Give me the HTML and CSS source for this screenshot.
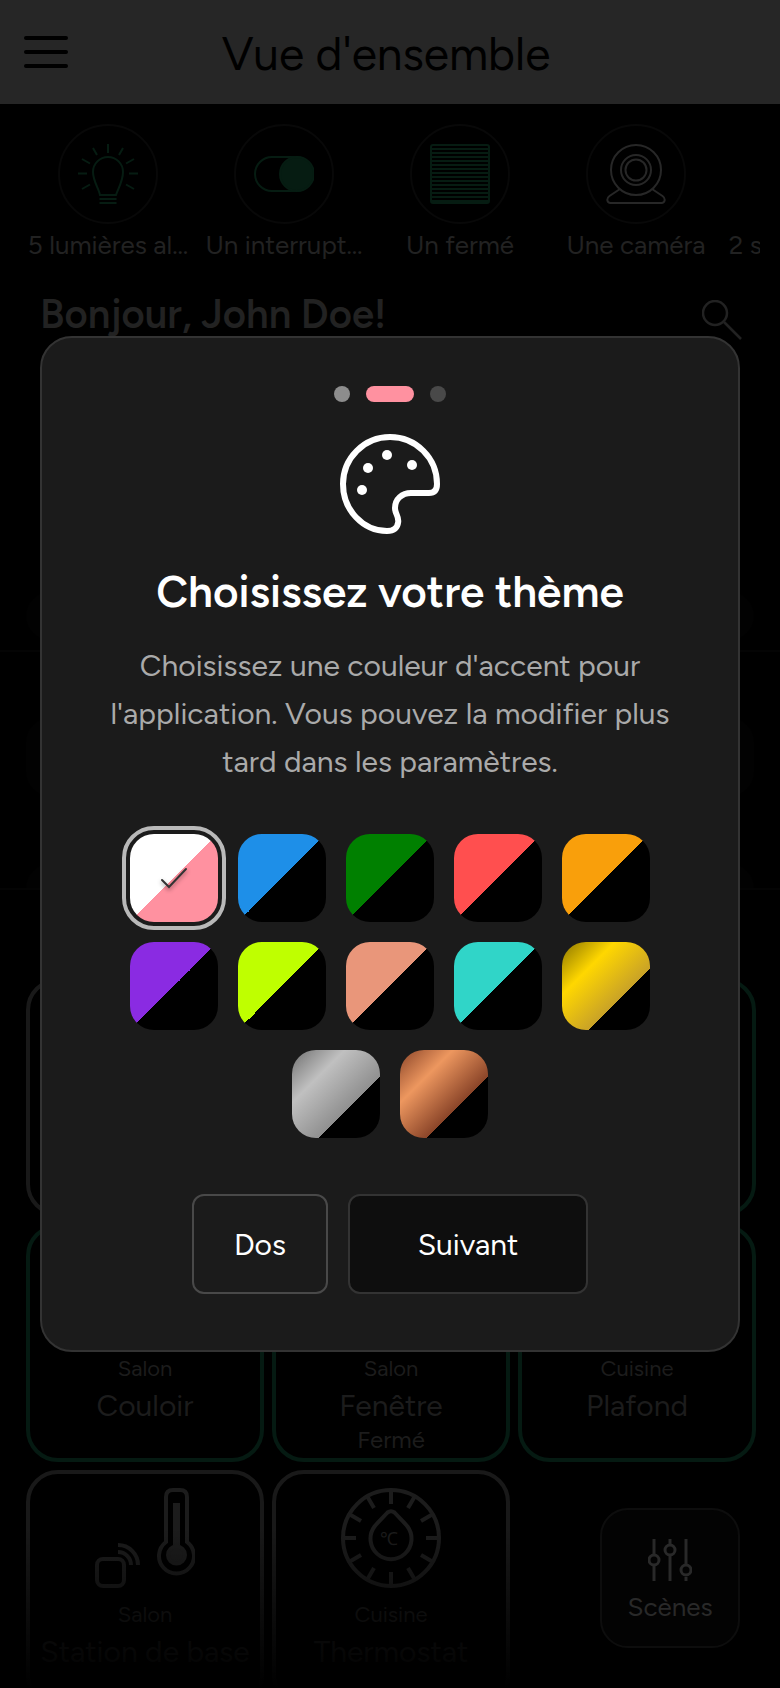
FILE: index.html
```html
<!DOCTYPE html>
<html lang="fr">
<head>
    <meta charset="UTF-8">
    <meta name="viewport" content="width=device-width, initial-scale=1.0">
    <title>Vue d'ensemble</title>
    <link rel="stylesheet" href="styles.css">
</head>
<body>

<div class="app">
    <header class="header">
        <button class="menu-btn" type="button" aria-label="Menu">
            <span></span><span></span><span></span>
        </button>
        <h1 class="header-title">Vue d'ensemble</h1>
    </header>

    <main class="content">
        <div class="status-bar">
            <a class="status green" href="#lights">
                <span class="status-icon">
                    <svg viewBox="0 0 60 60" fill="none" stroke="currentColor" stroke-width="2">
                        <path d="M22 51c-1-6-7-14-7-23a15 15 0 0 1 30 0c0 9-5 17-7 23z"/>
                        <path d="M21.500 55h17M21.500 59h17M30 0v9M15 4l4 7M45 4l-4 7M4 15l8 4.500M56 15l-8 4.500M0 29.500h9M60 29.500h-9M4 45l8-4.500M56 45l-8-4.500"/>
                    </svg>
                </span>
                <span class="status-label">5 lumières al…</span>
            </a>
            <a class="status green" href="#switches">
                <span class="status-icon">
                    <svg viewBox="0 0 60 60" fill="none" stroke="currentColor" stroke-width="2">
                        <rect x="1" y="13" width="58" height="34" rx="17"/>
                        <circle cx="43" cy="30" r="17" fill="currentColor"/>
                    </svg>
                </span>
                <span class="status-label">Un interrupt…</span>
            </a>
            <a class="status green" href="#covers">
                <span class="status-icon">
                    <svg viewBox="0 0 60 60" fill="none" stroke="currentColor" stroke-width="2">
                        <rect x="1" y="1" width="58" height="58" rx="2"/>
                        <path d="M1 5h58M1 9h58M1 13h58M1 17h58M1 21h58M1 25h58M1 29h58M1 33h58M1 37h58M1 41h58M1 45h58M1 49h58M1 53h58M1 57h58"/>
                    </svg>
                </span>
                <span class="status-label">Un fermé</span>
            </a>
            <a class="status" href="#cameras">
                <span class="status-icon">
                    <svg viewBox="0 0 60 60" fill="none" stroke="currentColor" stroke-width="2">
                        <circle cx="30" cy="26" r="25"/>
                        <circle cx="30" cy="26" r="15"/>
                        <circle cx="30" cy="26" r="10.500"/>
                        <path d="M14 45 3.500 52C0 54.500 1 59 4.500 59h51c3.500 0 4.500-4.500 1-7L46 45"/>
                    </svg>
                </span>
                <span class="status-label">Une caméra</span>
            </a>
            <a class="status" href="#sensors">
                <span class="status-icon"></span>
                <span class="status-label">2 serrures ou…</span>
            </a>
        </div>

        <div class="greeting">
            <h2 class="greeting-text">Bonjour, John Doe!</h2>
            <button class="search-btn" type="button" aria-label="Rechercher">
                <svg viewBox="0 0 40 40" fill="none" stroke="currentColor" stroke-width="2.500">
                    <circle cx="13" cy="13" r="12"/>
                    <path d="m22 22 17 17"/>
                </svg>
            </button>
        </div>

        <section class="panel panel-top">
            <div class="pill"></div>
        </section>
        <section class="panel">
            <div class="tile"></div>
            <div class="tile"></div>
        </section>

        <section class="cards">
            <article class="card"></article>
            <article class="card on"></article>
            <article class="card on"></article>
            <article class="card on">
                <div class="card-icon"></div>
                <p class="card-room">Salon</p>
                <h3 class="card-name">Couloir</h3>
            </article>
            <article class="card on">
                <div class="card-icon"></div>
                <p class="card-room">Salon</p>
                <h3 class="card-name">Fenêtre</h3>
                <p class="card-state">Fermé</p>
            </article>
            <article class="card on">
                <div class="card-icon"></div>
                <p class="card-room">Cuisine</p>
                <h3 class="card-name">Plafond</h3>
            </article>
            <article class="card">
                <svg class="card-icon" viewBox="0 0 100 100" fill="none" stroke="currentColor" stroke-width="4">
                    <rect x="2" y="71" width="27" height="27" rx="6"/>
                    <path d="M23 57a20 20 0 0 1 20 20M23 64a13 13 0 0 1 13 13"/>
                    <path d="M71 54V9q0-7 7-7h7q7 0 7 7v45a17.500 17.500 0 1 1-21 0z"/>
                    <path stroke-width="7" d="M81.500 15v48"/>
                    <circle cx="81.500" cy="67" r="8.500" fill="currentColor"/>
                </svg>
                <p class="card-room">Salon</p>
                <h3 class="card-name">Station de base</h3>
            </article>
            <article class="card">
                <svg class="card-icon" viewBox="0 0 100 100" fill="none" stroke="currentColor" stroke-width="4">
                    <circle cx="50" cy="50" r="48"/>
                    <path d="M50 2v14M50 84v14M2 50h13M85 50h13M26 8l7 12M74 8l-7 12M8 26l12 7M92 26l-12 7M8 74l12-7M92 74l-12-7M26 92l7-12M74 92l-7-12"/>
                    <path d="M46.500 24.500q3.500-2.500 7 0c5 5.500 10 10 13 14a20.500 20.500 0 1 1-33 0c3-4 8-8.500 13-14z"/>
                    <text class="unit" x="48" y="57" text-anchor="middle">℃</text>
                </svg>
                <p class="card-room">Cuisine</p>
                <h3 class="card-name">Thermostat</h3>
            </article>
        </section>
    </main>

    <div class="fade"></div>
    <button class="scenes" type="button">
        <svg viewBox="0 0 44 42" fill="none" stroke="currentColor" stroke-width="3">
            <path d="M6 0v15M6 27v15M22 0v5M22 17v25M38 0v26M38 38v4"/>
            <circle cx="6" cy="21" r="5"/>
            <circle cx="22" cy="11" r="5"/>
            <circle cx="38" cy="31" r="5"/>
        </svg>
        Scènes
    </button>
</div>

<div class="overlay">
    <div class="modal" role="dialog" aria-modal="true" aria-labelledby="modal-title">
        <div class="steps">
            <span class="step done"></span>
            <span class="step active"></span>
            <span class="step"></span>
        </div>
        <svg class="palette" viewBox="0 0 100 100" fill="none" stroke="#fff" stroke-width="6">
            <path d="M50 3a47 47 0 0 0-47 47c0 26 20 47 44 47 7 0 10.500-3 11.200-9 .7-6-3.200-8-3.200-14 0-9 7-15 16-15h18c6 0 8-4 8-9C97 24 76 3 50 3z"/>
            <g fill="#fff" stroke="none">
                <circle cx="22" cy="56" r="5"/>
                <circle cx="28" cy="34" r="5"/>
                <circle cx="47" cy="21" r="5"/>
                <circle cx="72" cy="31" r="5"/>
            </g>
        </svg>
        <h2 class="modal-title" id="modal-title">Choisissez votre thème</h2>
        <p class="modal-text">Choisissez une couleur d'accent pour l'application. Vous pouvez la modifier plus tard dans les paramètres.</p>

        <div class="swatches">
            <button class="swatch pink selected" type="button" aria-label="Rose" aria-pressed="true">
                <svg viewBox="0 0 28 24" fill="none" stroke="#333" stroke-width="2" stroke-linecap="round">
                    <path d="m2 14 7 7L26 3"/>
                </svg>
            </button>
            <button class="swatch blue" type="button" aria-label="Bleu"></button>
            <button class="swatch forest" type="button" aria-label="Vert"></button>
            <button class="swatch red" type="button" aria-label="Rouge"></button>
            <button class="swatch orange" type="button" aria-label="Orange"></button>
            <button class="swatch purple" type="button" aria-label="Violet"></button>
            <button class="swatch lime" type="button" aria-label="Citron vert"></button>
            <button class="swatch salmon" type="button" aria-label="Saumon"></button>
            <button class="swatch turquoise" type="button" aria-label="Turquoise"></button>
            <button class="swatch gold" type="button" aria-label="Or"></button>
            <button class="swatch silver" type="button" aria-label="Argent"></button>
            <button class="swatch bronze" type="button" aria-label="Bronze"></button>
        </div>

        <div class="actions">
            <button class="btn" type="button">Dos</button>
            <button class="btn btn-next" type="button">Suivant</button>
        </div>
    </div>
</div>

</body>
</html>
```
FILE: styles.css
```css
* {
    box-sizing: border-box;
}

body {
    margin: 0;
    background: #000;
    color: #222;
    font-family: Figtree, Lato, "Liberation Sans", sans-serif;
}

h1, h2, h3, p {
    margin: 0;
    font-weight: 400;
}

button {
    margin: 0;
    padding: 0;
    border: 0;
    background: none;
    color: inherit;
    font: inherit;
    cursor: pointer;
}

a {
    color: inherit;
    text-decoration: none;
}

svg {
    display: block;
}

.app {
    position: relative;
    height: 100vh;
    overflow: hidden;
}

/* header */
.header {
    display: grid;
    grid-template-columns: 44px 1fr 44px;
    align-items: center;
    height: 104px;
    padding: 4px 32px 0 24px;
    background: #262626;
    color: #000;
}

.menu-btn {
    display: flex;
    flex-direction: column;
    gap: 10px;
    padding-bottom: 4px;
}

.menu-btn span {
    width: 44px;
    height: 4px;
    border-radius: 2px;
    background: #000;
}

.header-title {
    font-size: 46px;
    line-height: 56px;
    text-align: center;
}

/* status icons */
.status-bar {
    display: flex;
    gap: 16px;
    margin: 20px 20px 0;
    padding-left: 8px;
    overflow: hidden;
}

.status {
    flex: none;
    display: flex;
    flex-direction: column;
    align-items: center;
    gap: 4px;
    width: 160px;
}

.status-icon {
    display: grid;
    place-items: center;
    width: 100px;
    height: 100px;
    border: 2px solid #080808;
    border-radius: 50%;
    color: #272727;
}

.status-icon svg {
    width: 60px;
}

.green .status-icon {
    color: #061c12;
}

.status-label {
    white-space: nowrap;
    font-size: 26px;
    line-height: 34px;
}

.greeting {
    display: flex;
    justify-content: space-between;
    align-items: center;
    margin: 28px 38px 0 40px;
    height: 48px;
}

.greeting-text {
    font-size: 40px;
    font-weight: 600;
    line-height: 48px;
}

.search-btn {
    margin-top: 12px;
}

.search-btn svg {
    width: 40px;
}

/* panels */
.panel {
    height: 238px;
    padding: 66px 26px 0;
    border-bottom: 2px solid #040404;
    overflow: hidden;
}

.panel-top {
    height: 314px;
    padding-top: 254px;
}

.pill,
.tile {
    height: 48px;
    border-radius: 24px;
    background: #020202;
}

.tile {
    height: 78px;
    margin-bottom: 68px;
}

/* device cards */
.cards {
    display: grid;
    grid-template-columns: repeat(3, 1fr);
    gap: 8px;
    padding: 88px 24px 0 26px;
}

.card {
    display: flex;
    flex-direction: column;
    align-items: center;
    aspect-ratio: 1;
    padding-top: 14px;
    border: 4px solid #191919;
    border-radius: 32px;
    color: #1c1c1c;
    white-space: nowrap;
}

.card.on {
    border-color: #051a12;
}

.card-icon {
    width: 100px;
    height: 100px;
    margin-bottom: 12px;
}

.unit {
    fill: currentColor;
    stroke: none;
    font-size: 18px;
}

.card-room {
    font-size: 22px;
    line-height: 30px;
}

.card-name {
    font-size: 30px;
    line-height: 44px;
}

.card-state {
    font-size: 24px;
    line-height: 24px;
}

.fade {
    position: absolute;
    inset: auto 0 0;
    height: 160px;
    background: linear-gradient(transparent, #000);
}

.scenes {
    position: absolute;
    right: 40px;
    bottom: 40px;
    display: flex;
    flex-direction: column;
    align-items: center;
    justify-content: center;
    gap: 10px;
    width: 140px;
    height: 140px;
    padding-top: 6px;
    border: 2px solid #0d0d0d;
    border-radius: 28px;
    background: #030303;
    color: #292929;
    font-size: 26px;
    line-height: 32px;
}

.scenes svg {
    width: 44px;
}

/* theme dialog */
.overlay {
    position: fixed;
    inset: 0;
    display: flex;
    align-items: center;
    padding: 0 40px;
}

.modal {
    display: flex;
    flex-direction: column;
    align-items: center;
    width: 100%;
    padding: 48px 56px 56px;
    border: 2px solid #333;
    border-radius: 32px;
    background: #1b1b1b;
    text-align: center;
}

.steps {
    display: flex;
    gap: 16px;
    margin-bottom: 32px;
}

.step {
    width: 16px;
    height: 16px;
    border-radius: 8px;
    background: #494949;
}

.step.done {
    background: #8d8d8d;
}

.step.active {
    width: 48px;
    background: #ff91a0;
}

.palette {
    width: 100px;
    margin-bottom: 32px;
}

.modal-title {
    margin-bottom: 24px;
    color: #fff;
    font-size: 44px;
    font-weight: 600;
    line-height: 52px;
}

.modal-text {
    max-width: 580px;
    margin-bottom: 48px;
    color: #aaa;
    font-size: 30px;
    line-height: 48px;
}

.swatches {
    display: flex;
    flex-wrap: wrap;
    justify-content: center;
    gap: 20px;
    max-width: 560px;
    margin-bottom: 56px;
}

.swatch {
    display: grid;
    place-items: center;
    width: 88px;
    height: 88px;
    border-radius: 24px;
}

.swatch svg {
    width: 28px;
    filter: drop-shadow(0 2px 2px rgba(0, 0, 0, 0.4));
}

.selected {
    outline: 4px solid #b9b9b9;
    outline-offset: 4px;
}

.pink { background: linear-gradient(135deg, #fff 50%, #ff91a0 50%); }
.blue { background: linear-gradient(135deg, #1e8fe8 50%, #000 50%); }
.forest { background: linear-gradient(135deg, #008000 50%, #000 50%); }
.red { background: linear-gradient(135deg, #ff4f4f 50%, #000 50%); }
.orange { background: linear-gradient(135deg, #f99f0b 50%, #000 50%); }
.purple { background: linear-gradient(135deg, #8a2be2 50%, #000 50%); }
.lime { background: linear-gradient(135deg, #bfff00 50%, #000 50%); }
.salmon { background: linear-gradient(135deg, #e9967a 50%, #000 50%); }
.turquoise { background: linear-gradient(135deg, #30d5c8 50%, #000 50%); }
.gold { background: linear-gradient(135deg, #8b7500, #ffd700 30%, #c9a227 65%, #000 65%); }
.silver { background: linear-gradient(135deg, #707070, #c0c0c0 30%, #909090 65%, #000 65%); }
.bronze { background: linear-gradient(135deg, #8b4529, #ed975f 30%, #8b4529 65%, #000 65%); }

.actions {
    display: flex;
    gap: 20px;
}

.btn {
    min-width: 136px;
    height: 100px;
    border: 2px solid #494949;
    border-radius: 12px;
    color: #fff;
    font-size: 30px;
}

.btn-next {
    min-width: 240px;
    border-color: #333;
    background: #0e0e0e;
}
```
